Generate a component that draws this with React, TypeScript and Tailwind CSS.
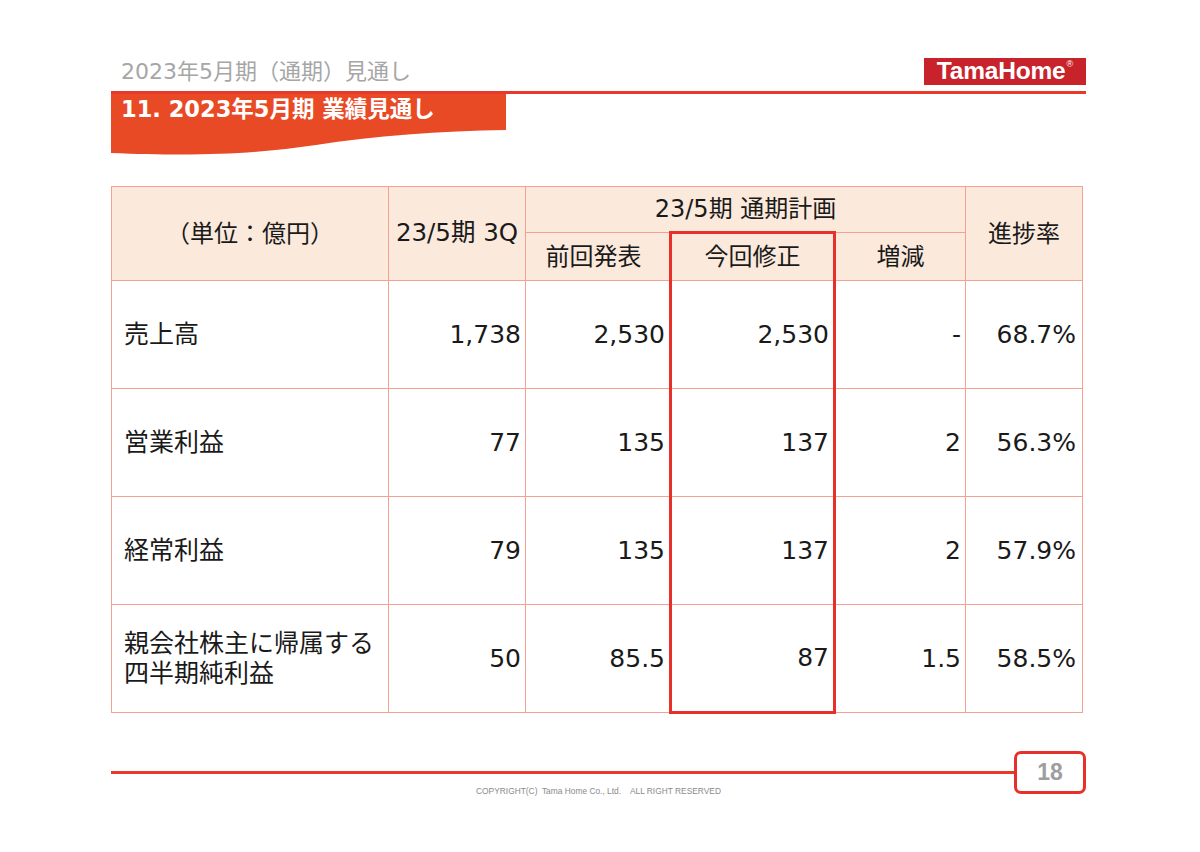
import React from "react";

const JP = '"DejaVu Sans", "Noto Sans CJK JP", sans-serif';

const rows: { label: React.ReactNode; v: string[] }[] = [
  { label: "売上高", v: ["1,738", "2,530", "2,530", "-", "68.7%"] },
  { label: "営業利益", v: ["77", "135", "137", "2", "56.3%"] },
  { label: "経常利益", v: ["79", "135", "137", "2", "57.9%"] },
  {
    label: (
      <>
        親会社株主に帰属する
        <br />
        四半期純利益
      </>
    ),
    v: ["50", "85.5", "87", "1.5", "58.5%"],
  },
];

export default function App() {
  return (
    <div className="w-[1200px] h-[852px] bg-white overflow-hidden" style={{ fontFamily: JP }}>
      <div className="pt-[58px] pl-[111px]">
        <div className="w-[975px] flex justify-between items-end h-[27px]">
          <div className="pl-[10px] text-[22px] leading-[27px] text-[#a6a6a6] whitespace-nowrap">
            2023年5月期（通期）見通し
          </div>
          <div
            className="w-[162px] h-[27px] bg-[#c8232b] flex items-center justify-center text-white font-bold text-[24.5px] leading-none"
            style={{ fontFamily: '"Liberation Sans", Arial, sans-serif' }}
          >
            <span className="tracking-[-0.2px]">TamaHome</span>
            <span className="text-[9px] self-start mt-[2px] ml-[1px] font-normal">®</span>
          </div>
        </div>
        <div className="h-[6px]" />
        <div className="w-[975px] h-[3px] bg-[#e8392b]" />
        <div className="relative w-[395px] h-[61px]">
          <svg className="absolute inset-0" width="395" height="61" viewBox="0 0 395 61">
            <path
              d="M0 0 H395 V36 C330 37 262 42 205 51 C150 59 95 63 0 59 Z"
              fill="#e94a26"
            />
          </svg>
          <div className="relative pl-[10px] pt-[2px] text-white font-bold text-[22.5px] leading-[26px] whitespace-nowrap">
            11. 2023年5月期 業績見通し
          </div>
        </div>

        <table className="mt-[31px] border-collapse table-fixed w-[971px] text-[#1a1a1a]">
          <colgroup>
            <col className="w-[277px]" />
            <col className="w-[137px]" />
            <col className="w-[145px]" />
            <col className="w-[164px]" />
            <col className="w-[131px]" />
            <col className="w-[117px]" />
          </colgroup>
          <thead>
            <tr className="h-[46px] bg-[#fbe9dc]">
              <th rowSpan={2} className="border border-[#f4a093] font-normal text-[24px] text-center">
                （単位：億円）
              </th>
              <th rowSpan={2} className="border border-[#f4a093] font-normal text-[24.5px] text-center whitespace-nowrap px-0">
                23/5期 3Q
              </th>
              <th colSpan={3} className="border border-[#f4a093] font-normal text-[24px] text-center">
                23/5期 通期計画
              </th>
              <th rowSpan={2} className="border border-[#f4a093] font-normal text-[24px] text-center">
                進捗率
              </th>
            </tr>
            <tr className="h-[48px] bg-[#fbe9dc]">
              <th className="border border-[#f4a093] font-normal text-[24px] text-center pr-[8px]">前回発表</th>
              <th className="border-x-[3px] border-t-[3px] border-b border-x-[#e8302a] border-t-[#e8302a] border-b-[#f4a093] font-normal text-[24px] text-center">
                今回修正
              </th>
              <th className="border border-[#f4a093] font-normal text-[24px] text-center">増減</th>
            </tr>
          </thead>
          <tbody>
            {rows.map((r, i) => {
              const last = i === rows.length - 1;
              return (
                <tr key={i} className="h-[108px]">
                  <td className="border border-[#f4a093] pl-[12px] text-[25px] leading-[30px]">{r.label}</td>
                  <td className="border border-[#f4a093] pr-[4px] text-right text-[25px]">{r.v[0]}</td>
                  <td className="border border-[#f4a093] pr-[4px] text-right text-[25px]">{r.v[1]}</td>
                  <td
                    className={
                      last
                        ? "border-x-[3px] border-b-[3px] border-t border-x-[#e8302a] border-b-[#e8302a] border-t-[#f4a093] pr-[4px] text-right text-[25px]"
                        : "border-x-[3px] border-y border-x-[#e8302a] border-y-[#f4a093] pr-[4px] text-right text-[25px]"
                    }
                  >
                    {r.v[2]}
                  </td>
                  <td className="border border-[#f4a093] pr-[4px] text-right text-[25px]">{r.v[3]}</td>
                  <td className="border border-[#f4a093] pr-[6px] text-right text-[25px]">{r.v[4]}</td>
                </tr>
              );
            })}
          </tbody>
        </table>

        <div className="w-[975px] mt-[37px]">
          <div className="flex items-center h-[43px]">
            <div className="flex-1 h-[3px] bg-[#e8392b]" />
            <div
              className="w-[72px] h-[43px] border-[3px] border-[#e8302a] rounded-[7px] flex items-center justify-center text-[23px] font-bold text-[#9e9e9e]"
              style={{ fontFamily: '"Liberation Sans", Arial, sans-serif' }}
            >
              18
            </div>
          </div>
          <div
            className="-mt-[8px] text-center text-[8.4px] leading-[10px] text-[#8a8a8a] whitespace-pre"
            style={{ fontFamily: '"Liberation Sans", Arial, sans-serif' }}
          >
            {"COPYRIGHT(C)  Tama Home Co., Ltd.    ALL RIGHT RESERVED"}
          </div>
        </div>
      </div>
    </div>
  );
}
